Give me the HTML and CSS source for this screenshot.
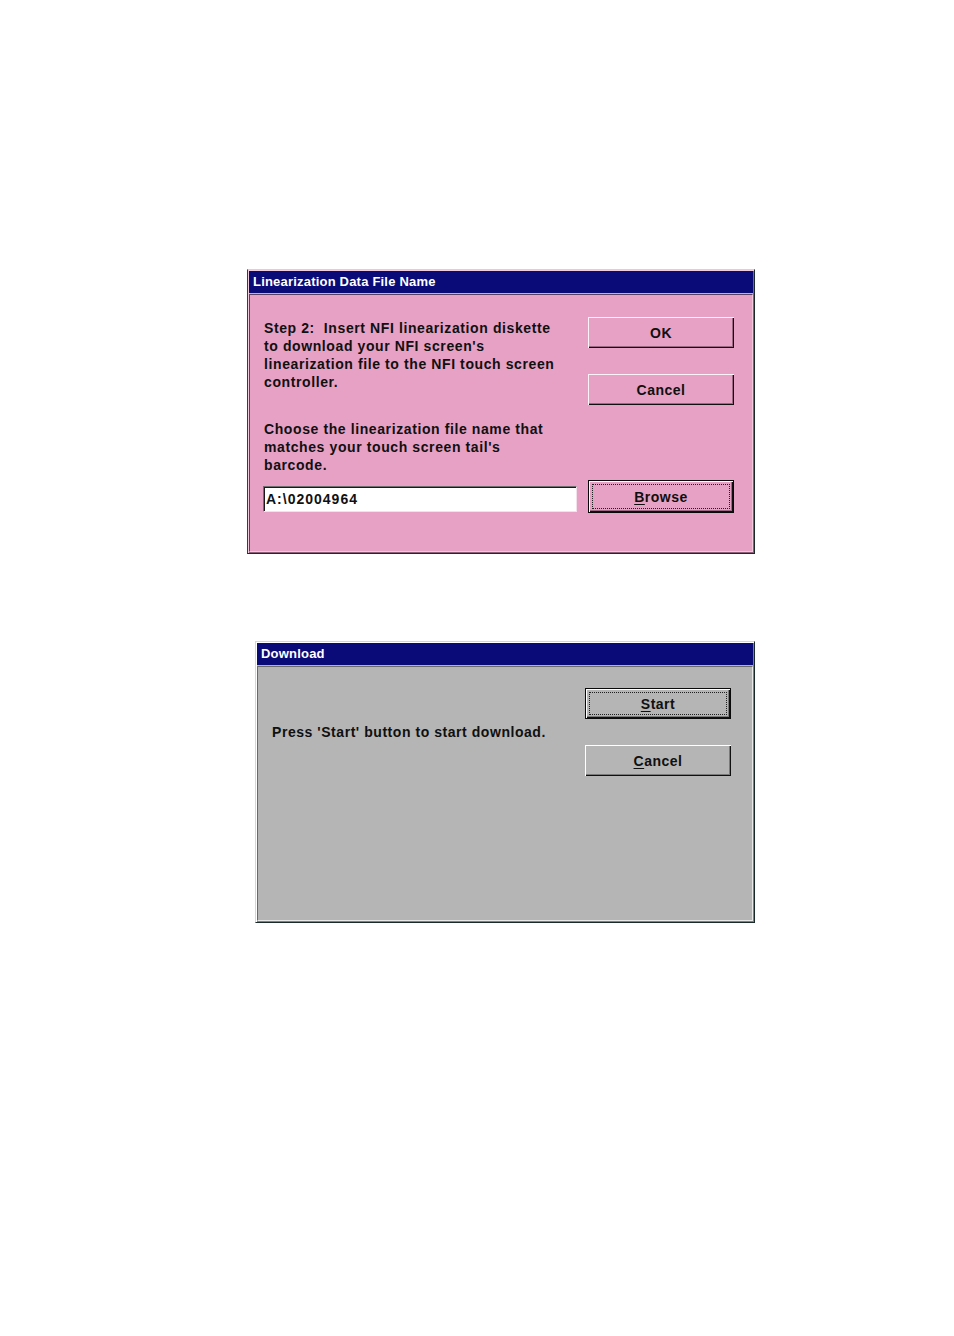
FILE: index.html
```html
<!DOCTYPE html>
<html>
<head>
<meta charset="utf-8">
<title>Dialogs</title>
<link rel="stylesheet" href="styles.css">
</head>
<body>
<div class="page">
  <div class="win win-pink">
    <div class="titlebar">Linearization Data File Name</div>
    <div class="client client-pink">
      <div class="col-left">
        <p class="msg msg-1">Step 2:&nbsp; Insert NFI linearization diskette<br>to download your NFI screen's<br>linearization file to the NFI touch screen<br>controller.</p>
        <p class="msg msg-2">Choose the linearization file name that<br>matches your touch screen tail's<br>barcode.</p>
        <div class="field">A:\02004964</div>
      </div>
      <div class="col-right">
        <div class="btn btn-pink">OK</div>
        <div class="btn btn-pink btn-gap">Cancel</div>
        <div class="btn btn-pink btn-default btn-browse"><span class="ul">B</span>rowse</div>
      </div>
    </div>
  </div>

  <div class="win win-gray">
    <div class="titlebar">Download</div>
    <div class="client client-gray">
      <div class="col-text">
        <p class="msg msg-dl">Press 'Start' button to start download.</p>
      </div>
      <div class="col-right">
        <div class="btn btn-gray btn-default"><span class="ul">S</span>tart</div>
        <div class="btn btn-gray btn-gap2"><span class="ul">C</span>ancel</div>
      </div>
    </div>
  </div>
</div>
</body>
</html>
```

FILE: styles.css
```css
html, body {
  margin: 0;
  padding: 0;
  background: #ffffff;
}

.page {
  padding-top: 269px;
  font-family: "Liberation Sans", Arial, sans-serif;
  color: #101010;
}

.win {
  box-sizing: border-box;
  border: 1px solid;
  padding: 1px;
  display: flex;
  flex-direction: column;
}

.win-pink {
  width: 508px;
  height: 285px;
  margin-left: 247px;
  background: #e6a1c4;
  border-color: #e9c8d8 #1c2a2a #1c2a2a #4a3050;
  box-shadow: inset 1px 1px #f2cde0, inset -1px -1px #8a6078;
}

.win-gray {
  width: 500px;
  height: 282px;
  margin-left: 255px;
  margin-top: 87px;
  background: #b5b5b5;
  border-color: #d6d6d6 #1a2a28 #1a2a28 #d6d6d6;
  box-shadow: inset 1px 1px #ffffff, inset -1px -1px #808080;
}

.titlebar {
  height: 22px;
  flex: none;
  background: #0a0a78;
  color: #ffffff;
  font-weight: 700;
  font-size: 13px;
  line-height: 22px;
  padding-left: 4px;
  letter-spacing: 0.2px;
}

.client {
  flex: 1;
  display: flex;
  border: 1px solid;
  margin-top: 1px;
}

.client-pink {
  border-color: #5a4060 #f0c8dc #f0c8dc #5a4060;
  padding: 22px 18px 0 13px;
  gap: 11px;
}

.client-gray {
  border-color: #6a6a6a #e8e8e8 #e8e8e8 #6a6a6a;
  padding: 21px 21px 0 13px;
  justify-content: space-between;
}

.col-left {
  width: 314px;
  display: flex;
  flex-direction: column;
}

.col-right {
  width: 146px;
  display: flex;
  flex-direction: column;
}

.msg {
  margin: 0;
  font-size: 14px;
  font-weight: 700;
  line-height: 18px;
  letter-spacing: 0.6px;
  padding-left: 1px;
  white-space: nowrap;
}

.msg-1 {
  margin-top: 2px;
}

.msg-2 {
  margin-top: 29px;
}

.msg-dl {
  margin-top: 35px;
  padding-left: 1px;
  letter-spacing: 0.55px;
}

.field {
  margin-top: 12px;
  height: 26px;
  box-sizing: border-box;
  background: #ffffff;
  border: 1px solid;
  border-color: #6e6e6e #f4e0ea #f4e0ea #6e6e6e;
  box-shadow: inset 1px 1px #1a1a1a;
  font-size: 14px;
  font-weight: 700;
  line-height: 24px;
  padding-left: 2px;
  letter-spacing: 1px;
  color: #111;
}

.btn {
  box-sizing: border-box;
  height: 31px;
  display: flex;
  align-items: center;
  justify-content: center;
  font-size: 14px;
  font-weight: 700;
  letter-spacing: 0.5px;
}

.btn-pink {
  background: #e6a1c4;
  box-shadow: inset 1px 1px #fff3f8, inset -1px -1px #101010, inset -2px -2px #9a6a82;
}

.btn-gray {
  background: #b5b5b5;
  box-shadow: inset 1px 1px #ffffff, inset -1px -1px #101010, inset -2px -2px #7a7a7a;
}

.btn-default {
  border: 1px solid #0a0a0a;
  outline: 1px dotted #202020;
  outline-offset: -5px;
}

.btn-gap {
  margin-top: 26px;
}

.btn-gap2 {
  margin-top: 26px;
}

.btn-browse {
  margin-top: 75px;
  height: 33px;
}

.ul {
  text-decoration: underline;
  text-underline-offset: 2px;
}
```
